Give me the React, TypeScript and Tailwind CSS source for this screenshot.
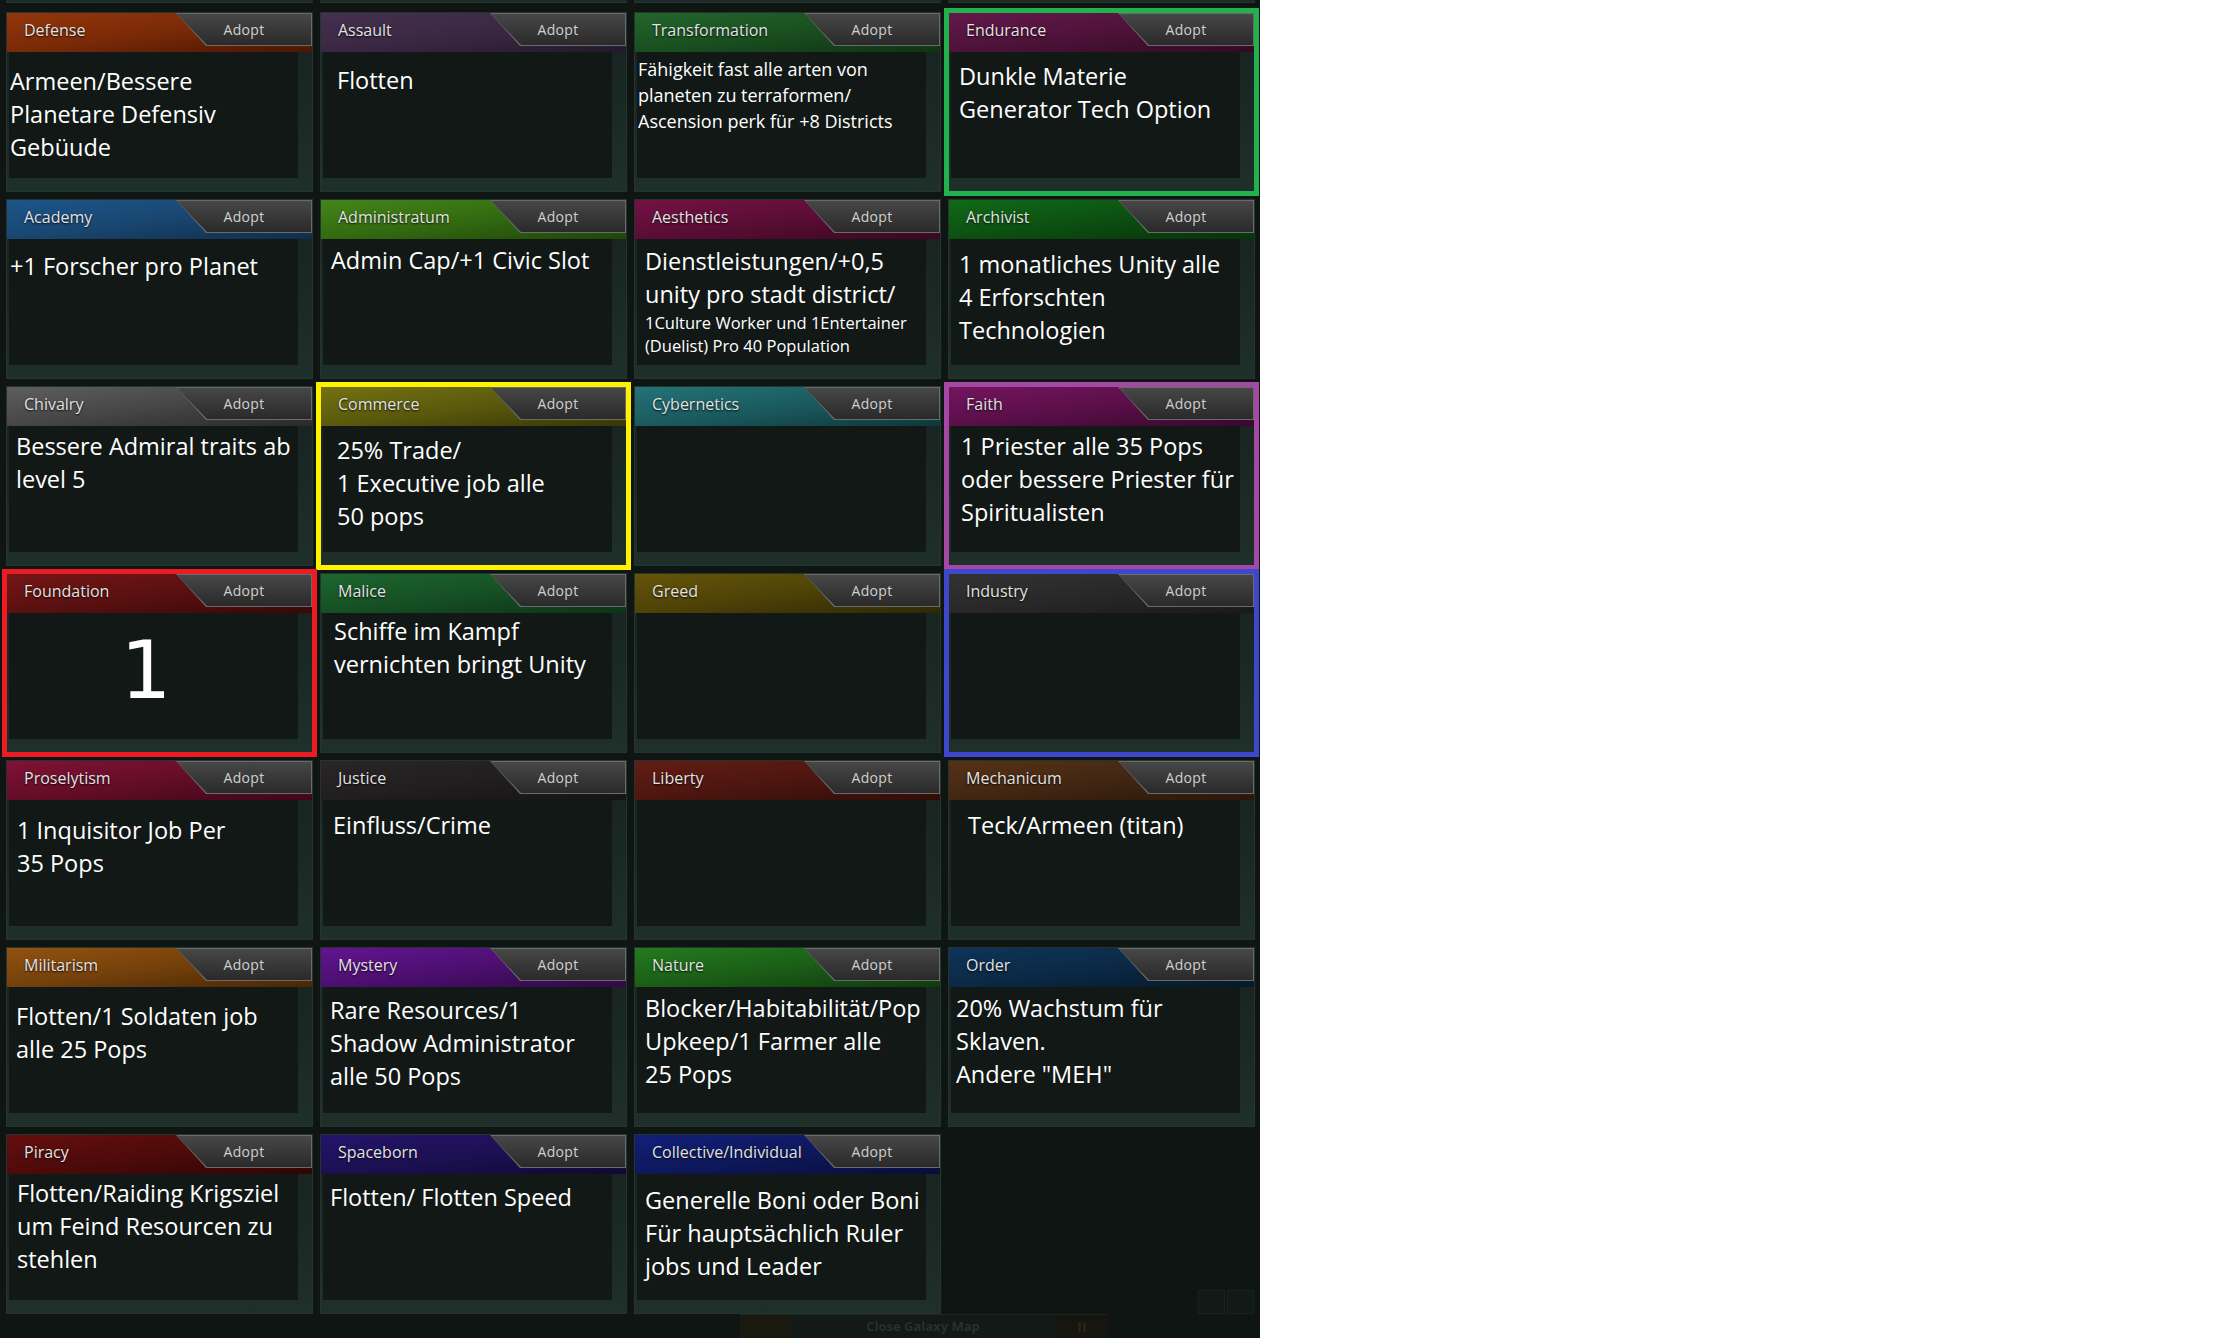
import React from "react";

type Civic = {
  name: string;
  head: string;
  pad?: string;
  lines?: string[];
  note?: string[];
  noteCls?: string;
  big?: string;
  ring?: string;
};

const civics: (Civic | null)[] = [
  {name: "Defense", head: "from-[#93360b] via-[#7a2a07] to-[#4b1503]", pad: "pt-[13px] pl-[1px]", lines: ["Armeen/Bessere", "Planetare Defensiv", "Gebüude"]},
  {name: "Assault", head: "from-[#45304f] via-[#3a2843] to-[#24182b]", pad: "pt-[12px] pl-[14px]", lines: ["Flotten"]},
  {
    name: "Transformation", head: "from-[#22662a] via-[#1a4f20] to-[#0f3313]", pad: "pt-[4px] pl-[1px]",
    note: ["Fähigkeit fast alle arten von", "planeten zu terraformen/", "Ascension perk für +8 Districts"],
    noteCls: "text-[18px] leading-[26px]"
  },
  {name: "Endurance", head: "from-[#64184c] via-[#4e1239] to-[#320a24]", pad: "pt-[8px] pl-[8px]", lines: ["Dunkle Materie", "Generator Tech Option"], ring: "outline-solid outline-[5px] outline-offset-[-1px] outline-[#22b14c]"},

  {name: "Academy", head: "from-[#1d558a] via-[#194670] to-[#0f2d4b]", pad: "pt-[11px] pl-[1px]", lines: ["+1 Forscher pro Planet"]},
  {name: "Administratum", head: "from-[#43861a] via-[#336a10] to-[#1f4608]", pad: "pt-[5px] pl-[8px]", lines: ["Admin Cap/+1 Civic Slot"]},
  {
    name: "Aesthetics", head: "from-[#741244] via-[#5a0d34] to-[#3a071f]", pad: "pt-[6px] pl-[8px]",
    lines: ["Dienstleistungen/+0,5", "unity pro stadt district/"],
    note: ["1Culture Worker und 1Entertainer", "(Duelist) Pro 40 Population"],
    noteCls: "text-[16.5px] leading-[23px]"
  },
  {name: "Archivist", head: "from-[#116a18] via-[#0c5011] to-[#06320a]", pad: "pt-[9px] pl-[8px]", lines: ["1 monatliches Unity alle", "4 Erforschten", "Technologien"]},

  {name: "Chivalry", head: "from-[#5e5e5e] via-[#464646] to-[#2a2a2a]", pad: "pt-[4px] pl-[7px]", lines: ["Bessere Admiral traits ab", "level 5"]},
  {name: "Commerce", head: "from-[#737212] via-[#5a590c] to-[#383706]", pad: "pt-[8px] pl-[14px]", lines: ["25% Trade/", "1 Executive job alle", "50 pops"], ring: "outline-solid outline-[5px] outline-offset-[-1px] outline-[#fff200]"},
  {name: "Cybernetics", head: "from-[#237378] via-[#1a5a5e] to-[#0e383b]"},
  {name: "Faith", head: "from-[#74145e] via-[#5a0f49] to-[#38082d]", pad: "pt-[4px] pl-[10px]", lines: ["1 Priester alle 35 Pops", "oder bessere Priester für", "Spiritualisten"], ring: "outline-solid outline-[5px] outline-offset-[-1px] outline-[#a349a4]"},

  {name: "Foundation", head: "from-[#741616] via-[#5a1010] to-[#380808]", big: "1", ring: "outline-solid outline-[5px] outline-offset-[-1px] outline-[#ed1c24]"},
  {name: "Malice", head: "from-[#1d6630] via-[#165024] to-[#0c3316]", pad: "pt-[2px] pl-[11px]", lines: ["Schiffe im Kampf", "vernichten bringt Unity"]},
  {name: "Greed", head: "from-[#65550a] via-[#4e4207] to-[#302804]"},
  {name: "Industry", head: "from-[#333333] via-[#282828] to-[#1a1a1a]", ring: "outline-solid outline-[5px] outline-offset-[-1px] outline-[#3f48cc]"},

  {name: "Proselytism", head: "from-[#801234] via-[#640d28] to-[#3e0717]", pad: "pt-[14px] pl-[8px]", lines: ["1 Inquisitor Job Per", "35 Pops"]},
  {name: "Justice", head: "from-[#2a2627] via-[#211e1f] to-[#151314]", pad: "pt-[9px] pl-[10px]", lines: ["Einfluss/Crime"]},
  {name: "Liberty", head: "from-[#621d14] via-[#4c160f] to-[#300d08]"},
  {name: "Mechanicum", head: "from-[#553218] via-[#422612] to-[#29170a]", pad: "pt-[9px] pl-[17px]", lines: ["Teck/Armeen (titan)"]},

  {name: "Militarism", head: "from-[#925210] via-[#74400b] to-[#482705]", pad: "pt-[13px] pl-[7px]", lines: ["Flotten/1 Soldaten job", "alle 25 Pops"]},
  {name: "Mystery", head: "from-[#621490] via-[#4c0f70] to-[#300946]", pad: "pt-[7px] pl-[7px]", lines: ["Rare Resources/1", "Shadow Administrator", "alle 50 Pops"]},
  {name: "Nature", head: "from-[#247a1e] via-[#1b5e17] to-[#0f3a0d]", pad: "pt-[5px] pl-[8px]", lines: ["Blocker/Habitabilität/Pop", "Upkeep/1 Farmer alle", "25 Pops"]},
  {name: "Order", head: "from-[#0e3459] via-[#0b2945] to-[#06182b]", pad: "pt-[5px] pl-[5px]", lines: ["20% Wachstum für", "Sklaven.", "Andere \"MEH\""]},

  {name: "Piracy", head: "from-[#650e0e] via-[#4e0a0a] to-[#300505]", pad: "pt-[3px] pl-[8px]", lines: ["Flotten/Raiding Krigsziel", "um Feind Resourcen zu", "stehlen"]},
  {name: "Spaceborn", head: "from-[#24146a] via-[#1c1052] to-[#100932]", pad: "pt-[7px] pl-[7px]", lines: ["Flotten/ Flotten Speed"]},
  {name: "Collective/Individual", head: "from-[#121f78] via-[#0e185c] to-[#080e38]", pad: "pt-[10px] pl-[8px]", lines: ["Generelle Boni oder Boni", "Für hauptsächlich Ruler", "jobs und Leader"]},
  null,
];

function CivicCard({c}: {c: Civic}) {
  return (
    <div className={`flex h-[180px] flex-col border border-[#243530] bg-linear-to-b from-[#162220] to-[#1f2f2a] ${c.ring ?? ""}`}>
      <div className={`flex h-[39px] shrink-0 items-start bg-linear-to-br ${c.head}`}>
        <div className="flex h-[33px] min-w-0 flex-1 items-center whitespace-nowrap pl-[17px] text-[16px] text-[#e2e2e2] [text-shadow:0_1px_2px_rgba(0,0,0,0.9)]">
          {c.name}
        </div>
        <div className="h-[33px] w-[136px] shrink-0 bg-[#6a6a6a] p-[1px] [clip-path:polygon(0_0,100%_0,100%_100%,30px_100%)]">
          <div className="flex h-full items-center justify-center bg-linear-to-b from-[#474747] to-[#2a2a2a] text-[14px] tracking-[0.3px] text-[#d0d0d0] [clip-path:polygon(0_0,100%_0,100%_100%,30px_100%)]">
            Adopt
          </div>
        </div>
      </div>
      <div className={`mb-[13px] ml-[2px] mr-[14px] flex-1 overflow-visible bg-[#121816] text-white ${c.pad ?? ""}`}>
        {c.lines && (
          <div className="whitespace-nowrap text-[23.5px] leading-[33px]">
            {c.lines.map((l) => <div key={l}>{l}</div>)}
          </div>
        )}
        {c.note && (
          <div className={`whitespace-nowrap ${c.noteCls}`}>
            {c.note.map((l) => <div key={l}>{l}</div>)}
          </div>
        )}
        {c.big && (
          <div className="flex justify-center pr-[15px] pt-[18px]">
            <span className="font-['DejaVu_Sans',sans-serif] text-[80px] leading-none">{c.big}</span>
          </div>
        )}
      </div>
    </div>
  );
}

export default function App() {
  return (
    <div className="min-h-screen bg-white">
      <div className="flex h-[1338px] w-[1260px] flex-col bg-[#0f1513] font-['Open_Sans',sans-serif]">
        <div className="grid grid-cols-[repeat(4,307px)] gap-x-[7px] pl-[6px]">
          {[0, 1, 2, 3].map((i) => (
            <div key={i} className="h-[3px] border-b border-[#243530] bg-[#1d2c27]"/>
          ))}
        </div>
        <div className="mt-[9px] grid grid-cols-[repeat(4,307px)] grid-rows-[repeat(7,180px)] gap-[7px] pl-[6px]">
          {civics.map((c, i) =>
            c ? <CivicCard key={c.name} c={c}/> : (
              <div key={i} className="flex items-end justify-end gap-[2px] pr-[1px]">
                <div className="h-[24px] w-[27px] border border-[#18221f] bg-[#121a17]"/>
                <div className="h-[24px] w-[27px] border border-[#18221f] bg-[#121a17]"/>
              </div>
            )
          )}
        </div>
        <div className="flex h-[24px] flex-1 items-stretch pl-[740px]">
          <div className="flex w-[368px] items-stretch border-t border-[#1b2521] bg-[#121916]">
            <div className="w-[50px] bg-[#19190f]"/>
            <div className="flex flex-1 items-center justify-center text-[13px] font-bold text-[#27302c]">
              Close Galaxy Map
            </div>
            <div className="flex w-[52px] items-center justify-center bg-[#17150f] text-[14px] font-bold text-[#2c2618]">
              II
            </div>
          </div>
        </div>
      </div>
    </div>
  );
}
